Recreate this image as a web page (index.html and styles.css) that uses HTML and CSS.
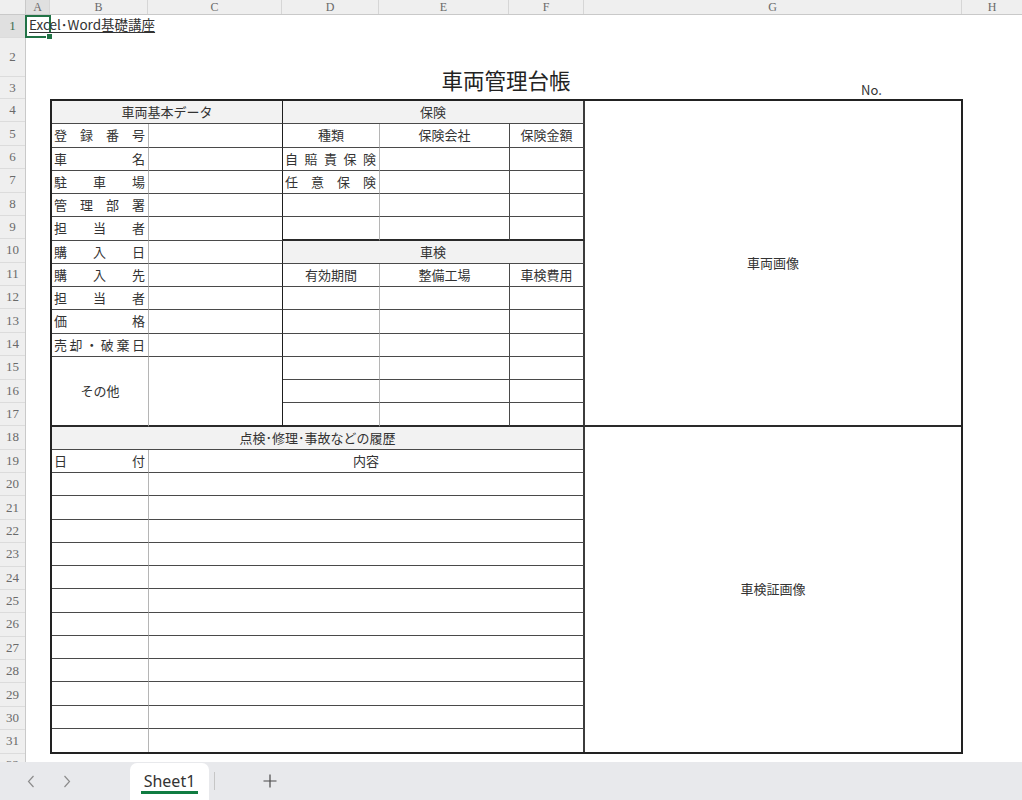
FILE: index.html
```html
<!DOCTYPE html>
<html lang="ja">
<head>
<meta charset="utf-8">
<title>車両管理台帳</title>
<link rel="stylesheet" href="styles.css">
</head>
<body>
<div class="app">
  <div class="colhead">
    <div class="corner"></div>
    <div class="ch ch-a sel">A</div>
    <div class="ch ch-b">B</div>
    <div class="ch ch-c">C</div>
    <div class="ch ch-d">D</div>
    <div class="ch ch-e">E</div>
    <div class="ch ch-f">F</div>
    <div class="ch ch-g">G</div>
    <div class="ch ch-h">H</div>
  </div>
  <div class="body">
    <div class="rowhead">
      <div class="rh h1 sel">1</div>
      <div class="rh h2">2</div>
      <div class="rh h3">3</div>
      <div class="rh">4</div>
      <div class="rh">5</div>
      <div class="rh">6</div>
      <div class="rh">7</div>
      <div class="rh">8</div>
      <div class="rh">9</div>
      <div class="rh">10</div>
      <div class="rh">11</div>
      <div class="rh">12</div>
      <div class="rh">13</div>
      <div class="rh">14</div>
      <div class="rh">15</div>
      <div class="rh">16</div>
      <div class="rh">17</div>
      <div class="rh">18</div>
      <div class="rh">19</div>
      <div class="rh">20</div>
      <div class="rh">21</div>
      <div class="rh">22</div>
      <div class="rh">23</div>
      <div class="rh">24</div>
      <div class="rh">25</div>
      <div class="rh">26</div>
      <div class="rh">27</div>
      <div class="rh">28</div>
      <div class="rh">29</div>
      <div class="rh">30</div>
      <div class="rh">31</div>
      <div class="rh">32</div>
    </div>
    <div class="canvas">
      <div class="row1">
        <div class="a1"><span class="link">Excel･Word基礎講座</span><i class="handle"></i></div>
      </div>
      <div class="row2"></div>
      <div class="row3">
        <h1 class="title">車両管理台帳</h1>
        <div class="no">No.</div>
      </div>
      <div class="form">
        <div class="c gtop">車両画像</div>
        <div class="c gbot">車検証画像</div>

        <div class="c hd s2 sec">車両基本データ</div>
        <div class="c hd s3 edge">保険</div>

        <div class="c dist lt"><span>登</span><span>録</span><span>番</span><span>号</span></div>
        <div class="c sec"></div>
        <div class="c lt">種類</div>
        <div class="c">保険会社</div>
        <div class="c edge">保険金額</div>

        <div class="c dist lt"><span>車</span><span>名</span></div>
        <div class="c sec"></div>
        <div class="c dist lt"><span>自</span><span>賠</span><span>責</span><span>保</span><span>険</span></div>
        <div class="c"></div>
        <div class="c edge"></div>

        <div class="c dist lt"><span>駐</span><span>車</span><span>場</span></div>
        <div class="c sec"></div>
        <div class="c dist lt"><span>任</span><span>意</span><span>保</span><span>険</span></div>
        <div class="c"></div>
        <div class="c edge"></div>

        <div class="c dist lt"><span>管</span><span>理</span><span>部</span><span>署</span></div>
        <div class="c sec"></div>
        <div class="c lt"></div>
        <div class="c"></div>
        <div class="c edge"></div>

        <div class="c dist lt"><span>担</span><span>当</span><span>者</span></div>
        <div class="c sec"></div>
        <div class="c lt thick"></div>
        <div class="c thick"></div>
        <div class="c edge thick"></div>

        <div class="c dist lt"><span>購</span><span>入</span><span>日</span></div>
        <div class="c sec"></div>
        <div class="c hd s3 edge">車検</div>

        <div class="c dist lt"><span>購</span><span>入</span><span>先</span></div>
        <div class="c sec"></div>
        <div class="c lt">有効期間</div>
        <div class="c">整備工場</div>
        <div class="c edge">車検費用</div>

        <div class="c dist lt"><span>担</span><span>当</span><span>者</span></div>
        <div class="c sec"></div>
        <div class="c lt"></div>
        <div class="c"></div>
        <div class="c edge"></div>

        <div class="c dist lt"><span>価</span><span>格</span></div>
        <div class="c sec"></div>
        <div class="c lt"></div>
        <div class="c"></div>
        <div class="c edge"></div>

        <div class="c dist lt"><span>売</span><span>却</span><span>・</span><span>破</span><span>棄</span><span>日</span></div>
        <div class="c sec"></div>
        <div class="c lt"></div>
        <div class="c"></div>
        <div class="c edge"></div>

        <div class="c tall lt thick">その他</div>
        <div class="c tall sec thick"></div>
        <div class="c lt"></div>
        <div class="c"></div>
        <div class="c edge"></div>
        <div class="c lt"></div>
        <div class="c"></div>
        <div class="c edge"></div>
        <div class="c lt thick"></div>
        <div class="c thick"></div>
        <div class="c edge thick"></div>

        <div class="c hd s5 edge">点検･修理･事故などの履歴</div>

        <div class="c dist lt"><span>日</span><span>付</span></div>
        <div class="c s4 edge">内容</div>

        <div class="c lt"></div><div class="c s4 edge"></div>
        <div class="c lt"></div><div class="c s4 edge"></div>
        <div class="c lt"></div><div class="c s4 edge"></div>
        <div class="c lt"></div><div class="c s4 edge"></div>
        <div class="c lt"></div><div class="c s4 edge"></div>
        <div class="c lt"></div><div class="c s4 edge"></div>
        <div class="c lt"></div><div class="c s4 edge"></div>
        <div class="c lt"></div><div class="c s4 edge"></div>
        <div class="c lt"></div><div class="c s4 edge"></div>
        <div class="c lt"></div><div class="c s4 edge"></div>
        <div class="c lt"></div><div class="c s4 edge"></div>
        <div class="c lt last"></div><div class="c s4 edge last"></div>
      </div>
    </div>
  </div>
  <div class="tabbar">
    <div class="nav">
      <span class="navbtn"><svg width="8" height="13" viewBox="0 0 8 13"><path d="M6.5 1 L1.5 6.5 L6.5 12" fill="none" stroke="#8c8c8c" stroke-width="1.2"/></svg></span>
      <span class="navbtn"><svg width="8" height="13" viewBox="0 0 8 13"><path d="M1.5 1 L6.5 6.5 L1.5 12" fill="none" stroke="#8c8c8c" stroke-width="1.2"/></svg></span>
    </div>
    <div class="tab"><span class="tablabel">Sheet1</span></div>
    <div class="sep"></div>
    <span class="plus"><svg width="14" height="14" viewBox="0 0 14 14"><path d="M7 0.5 V13.5 M0.5 7 H13.5" fill="none" stroke="#4a4a4a" stroke-width="1.2"/></svg></span>
  </div>
</div>
</body>
</html>
```

FILE: styles.css
```css
html, body {
  margin: 0;
  padding: 0;
  background: #fff;
  overflow: hidden;
}
body {
  font-family: "Noto Sans CJK JP", "Noto Sans", sans-serif;
  color: #333;
}
.app {
  width: 1022px;
  height: 800px;
  display: flex;
  flex-direction: column;
}

/* column header */
.colhead {
  display: flex;
  height: 15px;
  flex: none;
  box-sizing: border-box;
  background: #efefef;
  border-bottom: 1px solid #c9c9c9;
}
.corner {
  width: 26px;
  flex: none;
  box-sizing: border-box;
  border-right: 1px solid #c9c9c9;
}
.ch {
  flex: none;
  box-sizing: border-box;
  border-right: 1px solid #d6d6d6;
  font: 12px/14px "Liberation Serif", serif;
  color: #6a6a6a;
  text-align: center;
}
.ch.sel { background: #e0e0e0; }
.ch-a { width: 24px; }
.ch-b { width: 98px; }
.ch-c { width: 134px; }
.ch-d { width: 97px; }
.ch-e { width: 130px; }
.ch-f { width: 75px; }
.ch-g { width: 378px; }
.ch-h { flex: 1; border-right: none; }

/* body */
.body {
  flex: 1;
  display: flex;
  min-height: 0;
  overflow: hidden;
}
.rowhead {
  width: 26px;
  flex: none;
  box-sizing: border-box;
  background: #efefef;
  border-right: 1px solid #c9c9c9;
  display: flex;
  flex-direction: column;
}
.rh {
  height: 23.39px;
  flex: none;
  box-sizing: border-box;
  border-bottom: 1px solid #dcdcdc;
  display: flex;
  align-items: center;
  justify-content: center;
  font: 13px/14px "Liberation Serif", serif;
  color: #6a6a6a;
}
.rh.sel { background: #e0e0e0; color: #3d6e50; }
.rh.h1 { height: 23px; }
.rh.h2 { height: 39px; }
.rh.h3 { height: 22px; }

.canvas {
  flex: 1;
  min-width: 0;
  display: flex;
  flex-direction: column;
}
.row1 {
  height: 23px;
  flex: none;
  display: flex;
}
.a1 {
  position: relative;
  width: 26px;
  height: 23px;
  margin-left: -1px;
  box-sizing: border-box;
  border: 2px solid #217346;
  white-space: nowrap;
  padding-left: 2px;
  font-size: 13.5px;
  line-height: 14px;
}
.link {
  font-size: 13.5px;
  line-height: 14px;
  color: #333;
  text-decoration: underline;
  text-underline-offset: 2px;
}
.handle {
  position: absolute;
  right: -4px;
  bottom: -4px;
  width: 5px;
  height: 5px;
  background: #217346;
  border: 1px solid #fff;
}
.row2 {
  height: 39px;
  flex: none;
}
.row3 {
  height: 22px;
  flex: none;
  display: grid;
  grid-template-columns: 24px 534px 378px;
  grid-template-rows: 22px;
}
.title {
  grid-column: 2 / 4;
  grid-row: 1;
  align-self: end;
  margin: 0 0 8px 0;
  font-size: 21.5px;
  line-height: 22px;
  font-weight: 400;
  text-align: center;
  color: #222;
}
.no {
  grid-column: 3;
  grid-row: 1;
  align-self: end;
  margin-bottom: 1px;
  padding-left: 277px;
  font-size: 13px;
  line-height: 16px;
  color: #333;
}

/* form */
.form {
  margin-left: 24px;
  width: 913px;
  height: 655px;
  flex: none;
  box-sizing: border-box;
  border: 2px solid #222;
  display: grid;
  grid-template-columns: 97px 134px 97px 130px 75px 1fr;
  grid-template-rows: repeat(28, minmax(0, 1fr));
}
.c {
  display: flex;
  align-items: center;
  justify-content: center;
  min-width: 0;
  min-height: 0;
  overflow: hidden;
  border-right: 1px solid #4a4a4a;
  border-bottom: 1px solid #4a4a4a;
  font-size: 13px;
  line-height: 16px;
  color: #333;
  white-space: nowrap;
}
.hd { background: #f2f2f2; }
.lt { border-right-color: #b5b5b5; }
.sec { border-right-color: #1e1e1e; }
.edge { border-right: 2px solid #3c3c3c; }
.thick { border-bottom: 2px solid #2a2a2a; }
.last { border-bottom: none; }
.s2 { grid-column: span 2; }
.s3 { grid-column: span 3; }
.s4 { grid-column: span 4; }
.s5 { grid-column: span 5; }
.tall { grid-row: span 3; }
.gtop {
  grid-column: 6;
  grid-row: 1 / 15;
  border-right: none;
  border-bottom: 2px solid #2a2a2a;
}
.gbot {
  grid-column: 6;
  grid-row: 15 / 29;
  border-right: none;
  border-bottom: none;
}
.dist {
  justify-content: space-between;
  padding: 0 3px 0 2px;
}

/* tab bar */
.tabbar {
  height: 38px;
  flex: none;
  background: #e8e9ec;
  display: flex;
  align-items: flex-end;
}
.nav {
  display: flex;
  align-self: center;
  padding-left: 13px;
}
.navbtn {
  width: 36px;
  height: 16px;
  display: flex;
  align-items: center;
  justify-content: center;
}
.tab {
  margin-left: 45px;
  width: 79px;
  height: 37px;
  background: #fff;
  border-radius: 7px 7px 0 0;
  display: flex;
  align-items: center;
  justify-content: center;
}
.tablabel {
  font-family: "Noto Sans", "Open Sans", sans-serif;
  font-size: 16px;
  line-height: 20px;
  color: #333;
  padding: 2px 3px 0;
  border-bottom: 3px solid #107c41;
}
.sep {
  align-self: center;
  margin-left: 5px;
  width: 1px;
  height: 18px;
  background: #c6c6c6;
}
.plus {
  align-self: center;
  margin-left: 48px;
  width: 14px;
  height: 14px;
  display: flex;
}
```
